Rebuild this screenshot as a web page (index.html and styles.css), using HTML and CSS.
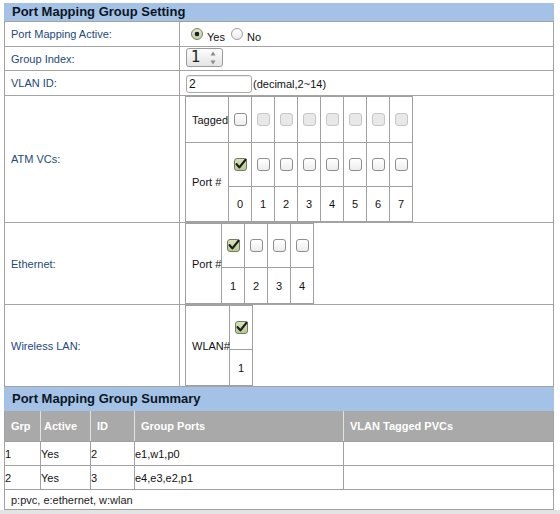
FILE: index.html
```html
<!DOCTYPE html>
<html>
<head>
<meta charset="utf-8">
<link rel="stylesheet" href="styles.css">
</head>
<body>
<div class="page">
  <div class="bar">Port Mapping Group Setting</div>
  <div class="setting">
    <div class="row r1">
      <div class="lab">Port Mapping Active:</div>
      <div class="val">
        <span class="radio on"></span><span class="rt">Yes</span>
        <span class="radio second"></span><span class="rt">No</span>
      </div>
    </div>
    <div class="row r2">
      <div class="lab">Group Index:</div>
      <div class="val">
        <div class="select"><span class="sel-val">1</span>
          <svg class="spin" width="6" height="14" viewBox="0 0 6 14"><path d="M3 0.5 L5.5 4.5 L0.5 4.5 Z" fill="#8a8a8a"/><path d="M0.5 9.5 L5.5 9.5 L3 13.5 Z" fill="#8a8a8a"/></svg>
        </div>
      </div>
    </div>
    <div class="row r3">
      <div class="lab">VLAN ID:</div>
      <div class="val">
        <input class="txt" type="text" value="2"><span class="hint">(decimal,2~14)</span>
      </div>
    </div>
    <div class="row r-atm">
      <div class="lab">ATM VCs:</div>
      <div class="val nest">
        <div class="ports atm">
          <div class="c lbl">Tagged</div>
          <div class="c"><span class="cb"></span></div>
          <div class="c"><span class="cb dis"></span></div>
          <div class="c"><span class="cb dis"></span></div>
          <div class="c"><span class="cb dis"></span></div>
          <div class="c"><span class="cb dis"></span></div>
          <div class="c"><span class="cb dis"></span></div>
          <div class="c"><span class="cb dis"></span></div>
          <div class="c"><span class="cb dis"></span></div>
          <div class="c lbl span2">Port #</div>
          <div class="c"><span class="cb on"><svg width="13" height="13" viewBox="0 0 13 13"><path d="M2.6 6.2 L5.4 9.4 L11.6 1.6" fill="none" stroke="#1c1c1c" stroke-width="2.2" stroke-linecap="round" stroke-linejoin="round"/></svg></span></div>
          <div class="c"><span class="cb"></span></div>
          <div class="c"><span class="cb"></span></div>
          <div class="c"><span class="cb"></span></div>
          <div class="c"><span class="cb"></span></div>
          <div class="c"><span class="cb"></span></div>
          <div class="c"><span class="cb"></span></div>
          <div class="c"><span class="cb"></span></div>
          <div class="c num">0</div>
          <div class="c num">1</div>
          <div class="c num">2</div>
          <div class="c num">3</div>
          <div class="c num">4</div>
          <div class="c num">5</div>
          <div class="c num">6</div>
          <div class="c num">7</div>
        </div>
      </div>
    </div>
    <div class="row r-eth">
      <div class="lab">Ethernet:</div>
      <div class="val nest">
        <div class="ports eth">
          <div class="c lbl span2">Port #</div>
          <div class="c"><span class="cb on"><svg width="13" height="13" viewBox="0 0 13 13"><path d="M2.6 6.2 L5.4 9.4 L11.6 1.6" fill="none" stroke="#1c1c1c" stroke-width="2.2" stroke-linecap="round" stroke-linejoin="round"/></svg></span></div>
          <div class="c"><span class="cb"></span></div>
          <div class="c"><span class="cb"></span></div>
          <div class="c"><span class="cb"></span></div>
          <div class="c num">1</div>
          <div class="c num">2</div>
          <div class="c num">3</div>
          <div class="c num">4</div>
        </div>
      </div>
    </div>
    <div class="row r-wlan">
      <div class="lab">Wireless LAN:</div>
      <div class="val nest">
        <div class="ports wlan">
          <div class="c lbl span2">WLAN#</div>
          <div class="c"><span class="cb on"><svg width="13" height="13" viewBox="0 0 13 13"><path d="M2.6 6.2 L5.4 9.4 L11.6 1.6" fill="none" stroke="#1c1c1c" stroke-width="2.2" stroke-linecap="round" stroke-linejoin="round"/></svg></span></div>
          <div class="c num">1</div>
        </div>
      </div>
    </div>
  </div>
  <div class="bar bar2">Port Mapping Group Summary</div>
  <div class="sum">
    <div class="sh">
      <div class="hc">Grp</div>
      <div class="hc hc-active">Active</div>
      <div class="hc">ID</div>
      <div class="hc">Group Ports</div>
      <div class="hc">VLAN Tagged PVCs</div>
    </div>
    <div class="sr">
      <div class="dc">1</div>
      <div class="dc">Yes</div>
      <div class="dc">2</div>
      <div class="dc">e1,w1,p0</div>
      <div class="dc"></div>
    </div>
    <div class="sr">
      <div class="dc">2</div>
      <div class="dc">Yes</div>
      <div class="dc">3</div>
      <div class="dc">e4,e3,e2,p1</div>
      <div class="dc"></div>
    </div>
    <div class="foot">p:pvc, e:ethernet, w:wlan</div>
  </div>
</div>
<div class="bottom"></div>
</body>
</html>
```

FILE: styles.css
```css
html, body {
  margin: 0;
  padding: 0;
  background: #ffffff;
}
body {
  font-family: "Liberation Sans", Arial, sans-serif;
  font-size: 11px;
  color: #111111;
}
.page {
  padding: 3px 0 0 4px;
  width: 550px;
}
.bar {
  height: 18px;
  line-height: 18px;
  background: #a4c2e6;
  font-weight: bold;
  font-size: 13px;
  color: #0c1622;
  padding-left: 8px;
}
.bar2 {
  height: 24px;
  line-height: 24px;
}
.setting {
  border: 1px solid #a3a3a3;
  border-bottom: none;
}
.row {
  display: grid;
  grid-template-columns: 175px 1fr;
  box-sizing: border-box;
  border-bottom: 1px solid #a3a3a3;
}
.r1 { height: 25px; }
.r2 { height: 24px; }
.r3 { height: 25px; }
.r-atm { height: 127px; }
.r-eth { height: 82px; }
.r-wlan { height: 82px; }
.lab {
  border-right: 1px solid #a3a3a3;
  padding-left: 6px;
  display: flex;
  align-items: center;
  color: #23497a;
}
.val {
  display: flex;
  align-items: center;
  padding-left: 6px;
}
.val.nest {
  align-items: flex-start;
  padding-left: 5px;
}
.radio {
  width: 12px;
  height: 12px;
  box-sizing: border-box;
  border-radius: 50%;
  border: 1px solid #9c9c9c;
  background: linear-gradient(#ffffff, #ebebeb);
  margin: 0 4px 0 5px;
}
.radio.on {
  border-color: #76845f;
  background: radial-gradient(circle, #1e1e1e 0, #1e1e1e 2px, rgba(0,0,0,0) 2.6px), linear-gradient(#dfe7cf, #c2cfa9);
}
.radio.second {
  margin-left: 6px;
}
.rt {
  margin-top: 6px;
  color: #111;
}
.select {
  align-self: flex-start;
  margin-top: 1px;
  width: 37px;
  height: 19px;
  box-sizing: border-box;
  border: 1px solid #9a9a9a;
  border-radius: 3px;
  background: linear-gradient(#fdfdfd, #e4e4e4);
  display: flex;
  align-items: center;
  padding-left: 4px;
}
.sel-val {
  font-family: "DejaVu Sans", sans-serif;
  font-size: 15px;
  color: #222;
  line-height: 17px;
}
.spin {
  margin-left: auto;
  margin-right: 6px;
}
.txt {
  width: 66px;
  height: 18px;
  box-sizing: border-box;
  border: 1px solid #a8a8a8;
  border-radius: 3px;
  padding: 0 2px;
  margin: 2px 0 0 0;
  font-family: "Liberation Sans", Arial, sans-serif;
  font-size: 12px;
  color: #111;
  box-shadow: inset 0 1px 1px rgba(0,0,0,0.08);
}
.hint {
  margin-left: 1px;
  margin-top: 2px;
}
.ports {
  display: grid;
  background: #a0a0a0;
  padding: 1px;
  gap: 1px;
}
.ports.atm {
  grid-template-columns: 42px repeat(8, 22px);
  grid-template-rows: 45px 43px 34px;
}
.ports.eth {
  grid-template-columns: 35px repeat(4, 22px);
  grid-template-rows: 43px 35px;
}
.ports.wlan {
  grid-template-columns: 43px 22px;
  grid-template-rows: 43px 35px;
}
.c {
  background: #ffffff;
  display: flex;
  align-items: center;
  justify-content: center;
}
.c.lbl {
  justify-content: flex-start;
  padding-left: 6px;
  white-space: nowrap;
}
.c.span2 {
  grid-row: span 2;
}
.c.num {
  color: #111;
}
.cb {
  width: 13px;
  height: 13px;
  box-sizing: border-box;
  border: 1px solid #8e8e8e;
  border-radius: 3px;
  background: linear-gradient(#ffffff, #ededed);
  display: flex;
  align-items: center;
  justify-content: center;
}
.cb svg {
  overflow: visible;
  flex: none;
}
.cb.dis {
  border-color: #c6c6c6;
  background: #e8e8e8;
}
.cb.on {
  border-color: #6f7e56;
  background: linear-gradient(#d6e2bc, #b8ca95);
}
.sum {
  border-left: 1px solid #a3a3a3;
  border-right: 1px solid #a3a3a3;
}
.sh, .sr {
  display: grid;
  grid-template-columns: 35px 49px 43px 208px 1fr;
  column-gap: 1px;
  box-sizing: border-box;
}
.sh {
  height: 31px;
  background: #e2e2e2;
  border-bottom: 1px solid #a0a0a0;
}
.hc {
  background: #a9a9a9;
  color: #ffffff;
  font-weight: bold;
  display: flex;
  align-items: center;
  padding-left: 6px;
  white-space: nowrap;
}
.hc-active {
  padding-left: 3px;
}
.sr {
  height: 24px;
  background: #a0a0a0;
  border-bottom: 1px solid #a0a0a0;
}
.dc {
  background: #ffffff;
  display: flex;
  align-items: center;
  padding-left: 0;
  white-space: nowrap;
}
.foot {
  height: 20px;
  box-sizing: border-box;
  border-bottom: 1px solid #a0a0a0;
  display: flex;
  align-items: center;
  padding-left: 6px;
  color: #222;
}
.bottom {
  height: 20px;
  background: #e4e4e4;
}
```
